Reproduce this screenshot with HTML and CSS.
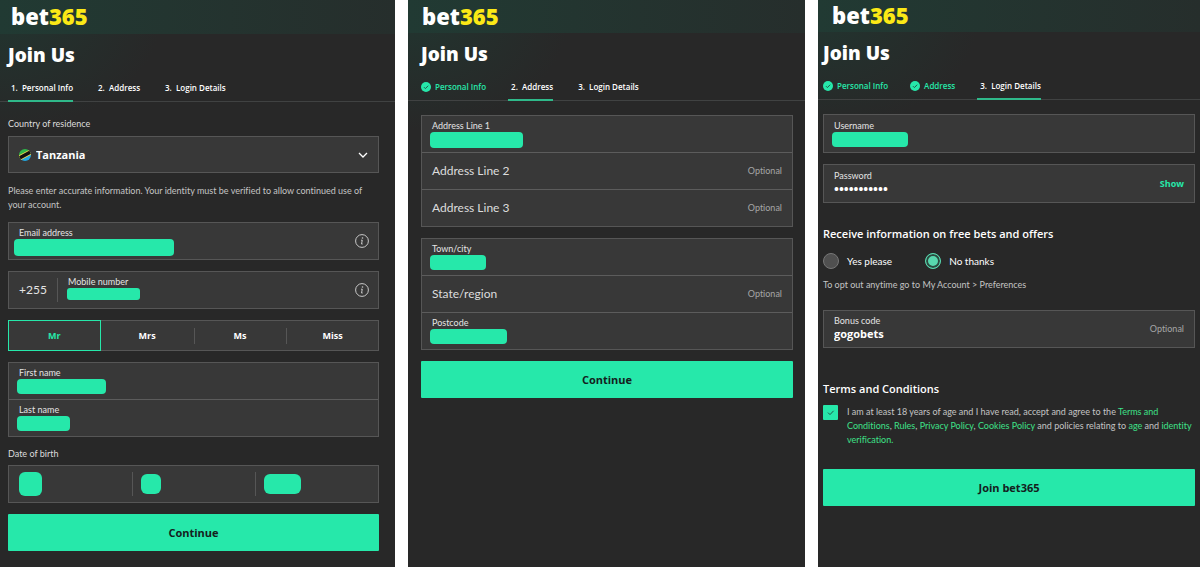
FILE: index.html
```html
<!DOCTYPE html>
<html lang="en">

<head>
    <meta charset="UTF-8">
    <meta name="viewport" content="width=device-width, initial-scale=1.0">
    <title>bet365 - Join Us</title>
    <link rel="stylesheet" href="styles.css">
</head>

<body>
    <main class="steps">

        <!-- Step 1 -->
        <section class="panel panel-personal">
            <header class="topbar">
                <div class="logo">bet<span>365</span></div>
            </header>
            <h1>Join Us</h1>
            <nav class="tabs">
                <a href="#" class="tab active">1.&nbsp; Personal Info</a>
                <a href="#" class="tab">2.&nbsp; Address</a>
                <a href="#" class="tab">3.&nbsp; Login Details</a>
            </nav>
            <form class="content">
                <label class="caption" for="country">Country of residence</label>
                <div class="box select-box">
                    <svg class="flag" viewBox="0 0 24 24">
                        <defs>
                            <clipPath id="round"><circle cx="12" cy="12" r="12"/></clipPath>
                        </defs>
                        <g clip-path="url(#round)">
                            <path fill="#2fb84a" d="M0 0h24L0 20z"/>
                            <path fill="#22a7e0" d="M24 24H0L24 4z"/>
                            <path stroke="#f5d84b" stroke-width="10" d="M-3 20L27 4"/>
                            <path stroke="#111" stroke-width="7" d="M-3 20L27 4"/>
                        </g>
                    </svg>
                    <select id="country">
                        <option>Tanzania</option>
                    </select>
                    <svg class="chevron" viewBox="0 0 10 6"><path d="M1 1l4 4 4-4"/></svg>
                </div>
                <p class="note">Please enter accurate information. Your identity must be verified to allow continued use of your account.</p>

                <div class="box">
                    <div class="row">
                        <div class="field">
                            <label for="email">Email address</label>
                            <input class="masked mask-email" type="email" id="email">
                        </div>
                        <button type="button" class="info" aria-label="Email info">
                            <svg viewBox="0 0 14 14"><circle cx="7" cy="7" r="6.4"/><circle class="dot" cx="7.5" cy="4" r=".8"/><path d="M6 6.2h1.3L6.5 10h1.2"/></svg>
                        </button>
                    </div>
                </div>

                <div class="box">
                    <div class="row">
                        <span class="prefix">+255</span>
                        <div class="field">
                            <label for="mobile">Mobile number</label>
                            <input class="masked mask-mobile" type="tel" id="mobile">
                        </div>
                        <button type="button" class="info" aria-label="Mobile info">
                            <svg viewBox="0 0 14 14"><circle cx="7" cy="7" r="6.4"/><circle class="dot" cx="7.5" cy="4" r=".8"/><path d="M6 6.2h1.3L6.5 10h1.2"/></svg>
                        </button>
                    </div>
                </div>

                <div class="titles">
                    <button type="button" class="selected">Mr</button>
                    <button type="button">Mrs</button>
                    <button type="button">Ms</button>
                    <button type="button">Miss</button>
                </div>

                <div class="box">
                    <div class="row">
                        <div class="field">
                            <label for="first">First name</label>
                            <input class="masked mask-first" type="text" id="first">
                        </div>
                    </div>
                    <div class="row">
                        <div class="field">
                            <label for="last">Last name</label>
                            <input class="masked mask-last" type="text" id="last">
                        </div>
                    </div>
                </div>

                <label class="caption caption-dob" for="day">Date of birth</label>
                <div class="box dob">
                    <div><input class="masked mask-day" type="text" id="day" aria-label="Day"></div>
                    <div><input class="masked mask-month" type="text" aria-label="Month"></div>
                    <div><input class="masked mask-year" type="text" aria-label="Year"></div>
                </div>

                <button type="button" class="submit">Continue</button>
            </form>
        </section>

        <!-- Step 2 -->
        <section class="panel panel-address">
            <header class="topbar">
                <div class="logo">bet<span>365</span></div>
            </header>
            <h1>Join Us</h1>
            <nav class="tabs">
                <a href="#" class="tab done"><svg viewBox="0 0 10 10"><circle cx="5" cy="5" r="5"/><path d="M3 5.2l1.4 1.4L7.2 3.7"/></svg>Personal Info</a>
                <a href="#" class="tab active">2.&nbsp; Address</a>
                <a href="#" class="tab">3.&nbsp; Login Details</a>
            </nav>
            <form class="content">
                <div class="box">
                    <div class="row">
                        <div class="field">
                            <label for="address1">Address Line 1</label>
                            <input class="masked mask-address" type="text" id="address1">
                        </div>
                    </div>
                    <div class="row empty">
                        <label for="address2">Address Line 2</label>
                        <input type="text" id="address2">
                        <span class="optional">Optional</span>
                    </div>
                    <div class="row empty">
                        <label for="address3">Address Line 3</label>
                        <input type="text" id="address3">
                        <span class="optional">Optional</span>
                    </div>
                </div>

                <div class="box">
                    <div class="row">
                        <div class="field">
                            <label for="town">Town/city</label>
                            <input class="masked mask-town" type="text" id="town">
                        </div>
                    </div>
                    <div class="row empty">
                        <label for="state">State/region</label>
                        <input type="text" id="state">
                        <span class="optional">Optional</span>
                    </div>
                    <div class="row">
                        <div class="field">
                            <label for="postcode">Postcode</label>
                            <input class="masked mask-postcode" type="text" id="postcode">
                        </div>
                    </div>
                </div>

                <button type="button" class="submit">Continue</button>
            </form>
        </section>

        <!-- Step 3 -->
        <section class="panel panel-login">
            <header class="topbar">
                <div class="logo">bet<span>365</span></div>
            </header>
            <h1>Join Us</h1>
            <nav class="tabs">
                <a href="#" class="tab done"><svg viewBox="0 0 10 10"><circle cx="5" cy="5" r="5"/><path d="M3 5.2l1.4 1.4L7.2 3.7"/></svg>Personal Info</a>
                <a href="#" class="tab done"><svg viewBox="0 0 10 10"><circle cx="5" cy="5" r="5"/><path d="M3 5.2l1.4 1.4L7.2 3.7"/></svg>Address</a>
                <a href="#" class="tab active">3.&nbsp; Login Details</a>
            </nav>
            <form class="content">
                <div class="box">
                    <div class="row tall">
                        <div class="field">
                            <label for="username">Username</label>
                            <input class="masked mask-user" type="text" id="username">
                        </div>
                    </div>
                </div>
                <div class="box">
                    <div class="row tall">
                        <div class="field">
                            <label for="password">Password</label>
                            <input class="password" type="password" id="password" value="placeholder">
                        </div>
                        <button type="button" class="show">Show</button>
                    </div>
                </div>

                <h2 class="offers-title">Receive information on free bets and offers</h2>
                <div class="radios">
                    <label><input type="radio" name="offers">Yes please</label>
                    <label><input type="radio" name="offers" checked>No thanks</label>
                </div>
                <p class="optout">To opt out anytime go to My Account &gt; Preferences</p>

                <div class="box">
                    <div class="row">
                        <div class="field">
                            <label for="bonus">Bonus code</label>
                            <input class="bonus" type="text" id="bonus" value="gogobets">
                        </div>
                        <span class="optional">Optional</span>
                    </div>
                </div>

                <h2 class="terms-title">Terms and Conditions</h2>
                <div class="terms">
                    <span class="check">
                        <input type="checkbox" id="terms" checked>
                        <svg viewBox="0 0 15 15"><path d="M5 7.6l2 2 3.6-3.8"/></svg>
                    </span>
                    <label for="terms">I am at least 18 years of age and I have read, accept and agree to the <a href="#">Terms and Conditions</a>, <a href="#">Rules</a>, <a href="#">Privacy Policy</a>, <a href="#">Cookies Policy</a> and policies relating to <a href="#">age</a> and <a href="#">identity verification.</a></label>
                </div>

                <button type="button" class="submit">Join bet365</button>
            </form>
        </section>

    </main>
</body>

</html>
```
FILE: styles.css
```css
* {
    box-sizing: border-box;
}

body {
    font-family: Lato, "Open Sans", sans-serif;
    font-size: 9px;
    line-height: 14px;
    font-variant-ligatures: none;
    margin: 0;
    background-color: #fff;
    color: #ddd;
}

input,
select,
button {
    font-family: inherit;
    font-size: inherit;
    color: inherit;
    margin: 0;
    padding: 0;
    border: none;
    background: none;
    border-radius: 0;
}

button {
    cursor: pointer;
}

a {
    text-decoration: none;
}

.logo,
h1,
h2,
.tab,
.titles button,
.submit,
.show,
.bonus,
.password,
.select-box select {
    font-family: "Open Sans", sans-serif;
    font-weight: 700;
}

.steps {
    display: grid;
    grid-template-columns: 395fr 397fr 382fr;
    gap: 13px;
    min-height: 100vh;
}

.panel {
    background: radial-gradient(ellipse 160px 110px at 0 20px, #22342f, #282828) #282828;
    min-width: 0;
}

.panel-personal {
    --left: 8px;
    --right: 16px;
    --bar: 34px;
}

.panel-address {
    --left: 13px;
    --right: 12px;
    --bar: 33px;
}

.panel-login {
    --left: 5px;
    --right: 5px;
    --bar: 32px;
}

.topbar {
    display: flex;
    align-items: center;
    height: var(--bar);
    padding-left: 11px;
    background: linear-gradient(to right, #213a33, #262e2c);
}

.panel-address .topbar,
.panel-login .topbar {
    padding-left: 14px;
}

.logo,
h1 {
    font-weight: 800;
    line-height: 28px;
    color: #fff;
}

.logo {
    font-size: 22px;
    line-height: 26px;
    padding-bottom: 2px;
}

.logo span {
    color: #fbe916;
}

h1 {
    margin: 7px 0 0;
    padding-left: var(--left);
    font-size: 19px;
}

/* step tabs */
.tabs {
    display: flex;
    gap: 22px;
    height: 33px;
    padding-left: var(--left);
    border-bottom: 1px solid #404242;
}

.tab {
    display: flex;
    align-items: center;
    height: 33px;
    padding: 7px 0 0 3px;
    font-size: 8px;
    font-weight: 600;
    color: #fff;
    white-space: nowrap;
    border-bottom: 2px solid transparent;
}

.tab.active {
    border-bottom-color: #2fb98a;
}

.tab.done {
    gap: 4px;
    padding-left: 0;
    color: #26e8aa;
}

.tab svg {
    width: 10px;
    height: 10px;
    fill: #26e8aa;
}

.tab path {
    fill: none;
    stroke: #20594a;
}

/* form boxes */
.content {
    display: flex;
    flex-direction: column;
    gap: 11px;
    padding: 14px var(--right) 16px var(--left);
}

.caption {
    color: #ddd;
    margin: 1px 0 -6px;
}

.note {
    margin: 0 0 -1px;
    color: #c4c4c4;
}

.box {
    background-color: #383838;
    border: 1px solid #565656;
}

.row {
    display: flex;
    align-items: center;
    height: 36px;
    padding: 0 10px;
}

.row + .row {
    height: 37px;
    border-top: 1px solid #5c5c5c;
}

.row.tall {
    height: 37px;
}

.field {
    flex: 1;
    display: flex;
    flex-direction: column;
    align-items: flex-start;
    align-self: flex-start;
    padding-top: 4px;
    line-height: 12px;
    color: #e4e4e4;
}

.tall .field {
    padding-top: 5px;
}

.masked {
    display: block;
    height: 15px;
    margin-left: -2px;
    background-color: #26e8aa;
    border-radius: 4px;
}

.mask-email {
    width: 160px;
    height: 17px;
    margin-left: -5px;
}

.mask-mobile {
    width: 73px;
    height: 12px;
    margin-left: -1px;
    border-radius: 3px;
}

.mask-first {
    width: 89px;
}

.mask-last {
    width: 53px;
}

.mask-address {
    width: 93px;
    height: 16px;
}

.mask-town {
    width: 56px;
}

.mask-postcode {
    width: 77px;
}

.mask-user {
    width: 76px;
}

.select-box {
    display: flex;
    align-items: center;
    height: 37px;
    padding: 0 10px;
}

.flag {
    width: 12px;
    height: 12px;
    margin-right: 5px;
}

.select-box select {
    flex: 1;
    height: 35px;
    appearance: none;
    font-size: 11px;
    color: #fff;
}

.chevron {
    width: 10px;
    height: 6px;
    fill: none;
    stroke: #fff;
    stroke-width: 1.3;
}

.info {
    width: 14px;
    height: 14px;
    margin-right: -1px;
}

.info svg {
    display: block;
    fill: none;
    stroke: #c8c8c8;
}

.info .dot {
    fill: #c8c8c8;
    stroke: none;
}

.prefix {
    width: 39px;
    height: 24px;
    margin-right: 10px;
    font-size: 12px;
    line-height: 24px;
    color: #e4e4e4;
    border-right: 1px solid #565656;
}

.titles {
    display: grid;
    grid-template-columns: repeat(4, 1fr);
    height: 31px;
    background-color: #383838;
    outline: 1px solid #565656;
    outline-offset: -1px;
}

.titles button {
    position: relative;
    color: #fff;
}

.titles button + button + button {
    background: linear-gradient(#565656, #565656) left center / 1px 16px no-repeat;
}

.titles .selected {
    color: #26e8aa;
    border: 1px solid #26e8aa;
}

.caption-dob {
    margin: -1px 0 -7px;
}

.dob {
    display: grid;
    grid-template-columns: repeat(3, 1fr);
    align-items: center;
    height: 38px;
}

.dob div {
    display: flex;
    align-items: center;
    height: 24px;
    padding-left: 10px;
}

.dob div + div {
    padding-left: 8px;
    border-left: 1px solid #565656;
}

.dob .masked {
    height: 20px;
    margin-left: 0;
    border-radius: 6px;
}

.dob .mask-day {
    width: 23px;
    height: 24px;
}

.mask-month {
    width: 20px;
}

.mask-year {
    width: 37px;
}

.submit {
    height: 37px;
    font-size: 11px;
    color: #14211d;
    background-color: #26e8aa;
    border-radius: 1px;
}

.empty label {
    font-size: 12px;
    color: #ddd;
}

.empty input {
    flex: 1;
    min-width: 0;
}

.optional {
    color: #a6a6a6;
}

.password {
    font-size: 13px;
    line-height: 14px;
    height: 14px;
    color: #fff;
}

.bonus {
    font-size: 11px;
    line-height: 14px;
    height: 14px;
    color: #fff;
}

.show {
    color: #26e8aa;
}

h2 {
    margin: 0;
    font-size: 11px;
    font-weight: 600;
    line-height: 16px;
    color: #fff;
}

.offers-title {
    margin-top: 12px;
}

.radios {
    display: flex;
    gap: 33px;
}

.radios label {
    display: flex;
    align-items: center;
    gap: 8px;
    font-size: 10px;
    color: #fff;
}

.radios input {
    appearance: none;
    width: 16px;
    height: 16px;
    border: 1px solid #777;
    border-radius: 50%;
    background-color: #505050;
}

.radios input:checked {
    border-color: #58d8ae;
    background-color: #58d8ae;
    box-shadow: inset 0 0 0 2px #2c4a40;
}

.optout {
    margin: -2px 0 7px;
    color: #c4c4c4;
}

.terms-title {
    margin-top: 22px;
}

.terms {
    display: flex;
    align-items: flex-start;
    gap: 9px;
    margin: -3px 0 11px;
    color: #c4c4c4;
}

.check {
    display: grid;
    flex: none;
    width: 15px;
    height: 15px;
}

.check input,
.check svg {
    grid-area: 1 / 1;
    width: 15px;
    height: 15px;
}

.check input {
    appearance: none;
    background-color: #26e8aa;
    border-radius: 1px;
}

.check svg {
    fill: none;
    stroke: #20594a;
    pointer-events: none;
}

.terms a {
    color: #3ee089;
}
```
